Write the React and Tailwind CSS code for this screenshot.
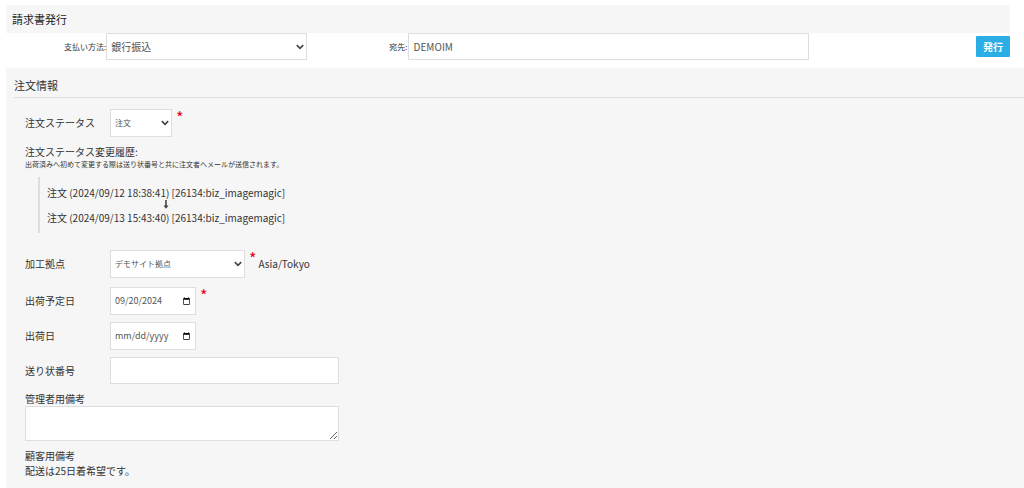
import React from "react";

const field =
  "border border-[#dedede] bg-white px-1 text-[#555] outline-none rounded-none";

const dateField = `${field} h-7 w-[86px] pr-[2px] text-[9px] [&::-webkit-datetime-edit-day-field]:p-0 [&::-webkit-datetime-edit-month-field]:p-0 [&::-webkit-datetime-edit-year-field]:p-0`;

function Required() {
  return (
    <span className="ml-1 self-start text-[16px] leading-4 text-[#e60012]" aria-label="必須">
      *
    </span>
  );
}

function Select({ id, className, children }) {
  return (
    <span className="relative flex">
      <select id={id} className={`${field} appearance-none ${className}`}>
        {children}
      </select>
      <svg
        viewBox="0 0 8 6"
        className="pointer-events-none absolute right-[3px] top-1/2 h-[6px] w-[8px] -translate-y-1/2"
        aria-hidden="true"
      >
        <path d="M0.8 1.1 4 4.3 7.2 1.1" fill="none" stroke="#444" strokeWidth="1.6" />
      </svg>
    </span>
  );
}

function Row({ id, label, required, note, children }) {
  return (
    <div className="flex items-center">
      <label htmlFor={id} className="w-[85px] shrink-0">
        {label}
      </label>
      {children}
      {required && <Required />}
      {note && <span className="ml-[2px]">{note}</span>}
    </div>
  );
}

function DownArrow() {
  return (
    <svg viewBox="0 0 6 10" className="h-[10px] w-[6px]" aria-hidden="true">
      <path d="M2.2 0h1.6v5.6h1.7L3 8.8 0.5 5.6h1.7z" fill="#444" />
    </svg>
  );
}

function InvoiceBar() {
  return (
    <section className="mr-[14px]">
      <h2 className="bg-[#f6f6f6] px-[6px] text-[11px] leading-7 text-[#222]">請求書発行</h2>
      <form className="flex items-center justify-between" onSubmit={(e) => e.preventDefault()}>
        <div className="flex w-[30%] items-center justify-end">
          <label htmlFor="payment" className="text-[8px]">
            支払い方法:
          </label>
          <Select id="payment" className="h-[27px] w-[201px] text-[10px]">
            <option>銀行振込</option>
          </Select>
        </div>
        <div className="flex w-[50%] items-center justify-end">
          <label htmlFor="recipient" className="text-[8px]">
            宛先:
          </label>
          <input
            id="recipient"
            type="text"
            defaultValue="DEMOIM"
            className={`${field} h-[27px] w-[80%] pl-[5px] text-[10px]`}
          />
        </div>
        <div className="flex w-[20%] justify-end">
          <button type="submit" className="h-[21px] w-[34px] rounded-[1px] bg-[#2baee6] text-[10px] font-bold text-white">
            発行
          </button>
        </div>
      </form>
    </section>
  );
}

function OrderInfo() {
  return (
    <section className="mt-2 grow bg-[#f6f6f6] pb-2 pl-2">
      <h2 className="border-b border-[#dedede] pt-[6px] text-[11px] leading-[23px]">注文情報</h2>
      <div className="pl-[11px] pt-[11px]">
        <Row id="status" label="注文ステータス" required>
          <Select id="status" className="h-7 w-[62px] text-[8px]">
            <option>注文</option>
          </Select>
        </Row>

        <div className="pt-2">
          <p className="leading-[14px]">注文ステータス変更履歴:</p>
          <p className="text-[7px] leading-[10px]">
            出荷済みへ初めて変更する際は送り状番号と共に注文者へメールが送信されます。
          </p>
        </div>

        <div className="ml-[13px] mt-2 flex w-fit flex-col items-center border-l-2 border-[#dedede] py-2 pl-[7px] leading-[15px]">
          <p>注文 (2024/09/12 18:38:41) [26134:biz_imagemagic]</p>
          <DownArrow />
          <p>注文 (2024/09/13 15:43:40) [26134:biz_imagemagic]</p>
        </div>

        <div className="mb-[9px] mt-[17px]">
          <Row id="base" label="加工拠点" required note="Asia/Tokyo">
            <Select id="base" className="h-7 w-[135px] text-[8px]">
              <option>デモサイト拠点</option>
            </Select>
          </Row>
        </div>

        <div className="flex flex-col gap-[7px]">
          <Row id="planned" label="出荷予定日" required>
            <input id="planned" type="date" defaultValue="2024-09-20" className={dateField} />
          </Row>
          <Row id="shipped" label="出荷日">
            <input id="shipped" type="date" className={dateField} />
          </Row>
          <Row id="tracking" label="送り状番号">
            <input id="tracking" type="text" className={`${field} h-[27px] w-[229px] text-[9px]`} />
          </Row>
        </div>

        <div className="mt-[7px] flex flex-col items-start">
          <label htmlFor="memo" className="leading-[15px]">
            管理者用備考
          </label>
          <textarea id="memo" className={`${field} h-[35px] w-[314px] text-[9px]`} />
        </div>

        <div className="mt-[7px] leading-[15px]">
          <p>顧客用備考</p>
          <p>配送は25日着希望です。</p>
        </div>
      </div>
    </section>
  );
}

export default function App() {
  return (
    <main
      lang="ja"
      className="flex min-h-screen flex-col bg-white pl-[6px] pt-[5px] font-['Noto_Sans_CJK_JP',sans-serif] text-[10px] leading-4 text-[#333]"
    >
      <InvoiceBar />
      <OrderInfo />
    </main>
  );
}
